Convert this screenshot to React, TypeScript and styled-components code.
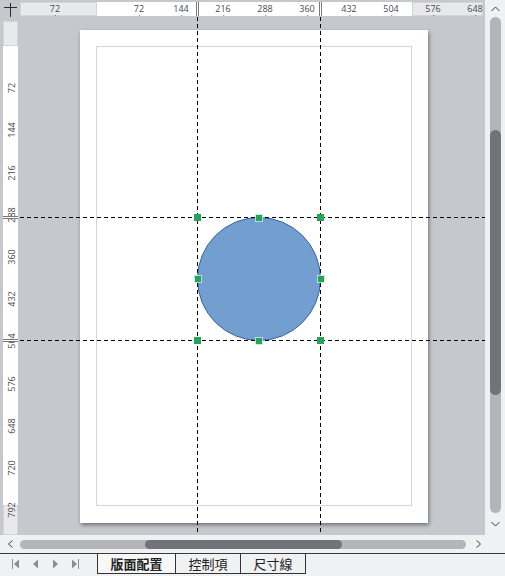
import React from 'react';
import styled, { createGlobalStyle } from 'styled-components';

const GlobalStyle = createGlobalStyle`
  html, body { margin: 0; padding: 0; background: #f0f1f2; overflow: hidden; }
  #root { width: 505px; height: 576px; }
`;

const Window = styled.div`
  width: 505px;
  height: 576px;
  display: flex;
  flex-direction: column;
  background: #f0f1f2;
  font-family: "Open Sans", "Noto Sans", sans-serif;
`;

const MainRow = styled.div`
  display: flex;
  height: 535px;
`;

const Editor = styled.div`
  width: 485px;
  background: #c5c9cd;
  display: grid;
  grid-template-columns: 20px 465px;
  grid-template-rows: 17px 518px;
`;

const Corner = styled.div`
  display: flex;
  padding: 3px 0 0 4px;
`;

const TopRuler = styled.div`
  margin-top: 2px;
  width: 463px;
  height: 14px;
  display: flex;
  position: relative;
  font-size: 9px;
  color: #4a4a4a;
`;

const Zone = styled.div<{ $size?: number; $white?: boolean; $vertical?: boolean }>`
  ${(p) => (p.$size ? `flex: 0 0 ${p.$size}px;` : 'flex: 1;')}
  background: ${(p) => (p.$white ? '#ffffff' : '#e7e9eb')};
  box-sizing: border-box;
  ${(p) => (p.$white ? '' : 'border: 1px solid #d2d5d8;')}
`;

const HLabel = styled.span`
  position: absolute;
  top: 1px;
  transform: translateX(-50%);
  line-height: 11px;
  white-space: nowrap;
  &::after {
    content: "";
    position: absolute;
    left: 50%;
    bottom: -2px;
    width: 1px;
    height: 1px;
    background: #777;
  }
`;

const HGuideMark = styled.div`
  position: absolute;
  top: 0;
  width: 1px;
  height: 14px;
  border-left: 1px solid #7a7a7a;
  border-right: 1px solid #7a7a7a;
  background: #fff;
`;

const LeftRuler = styled.div`
  margin: 4px 0 0 3px;
  width: 15px;
  height: 514px;
  display: flex;
  flex-direction: column;
  position: relative;
  font-size: 9px;
  color: #4a4a4a;
`;

const VLabel = styled.span`
  position: absolute;
  left: 50%;
  transform: translate(-50%, -50%) rotate(-90deg);
  line-height: 11px;
  white-space: nowrap;
`;

const VGuideMark = styled.div`
  position: absolute;
  left: 0;
  width: 15px;
  height: 1px;
  border-top: 1px solid #7a7a7a;
  border-bottom: 1px solid #7a7a7a;
  background: #fff;
`;

const Canvas = styled.div`
  position: relative;
  overflow: hidden;
  padding: 13px 0 0 60px;
  box-sizing: border-box;
`;

const Page = styled.div`
  width: 348px;
  height: 493px;
  background: #ffffff;
  box-shadow: 1px 2px 4px rgba(0, 0, 0, 0.45);
  padding: 16px 16px 17px 16px;
  box-sizing: border-box;
`;

const MarginBox = styled.div`
  height: 100%;
  border: 1px solid #d4d4d4;
  box-sizing: border-box;
`;

const Drawing = styled.svg`
  position: absolute;
  left: 0;
  top: 0;
`;

const VScroll = styled.div`
  width: 20px;
  display: flex;
  flex-direction: column;
  align-items: center;
`;

const ArrowBox = styled.div<{ $h?: number; $w?: number }>`
  ${(p) => (p.$h ? `height: ${p.$h}px;` : '')}
  ${(p) => (p.$w ? `width: ${p.$w}px; flex: 0 0 ${p.$w}px;` : '')}
  display: flex;
  align-items: center;
  justify-content: center;
`;

const VTrack = styled.div`
  width: 11px;
  flex: 1;
  margin-left: 1px;
  border-radius: 6px;
  background: #b3b5b8;
  display: flex;
  flex-direction: column;
`;

const VThumb = styled.div<{ $offset: number; $size: number }>`
  margin-top: ${(p) => p.$offset}px;
  height: ${(p) => p.$size}px;
  border-radius: 6px;
  background: #707377;
`;

const HScroll = styled.div`
  height: 18px;
  display: flex;
  align-items: center;
`;

const HTrack = styled.div`
  width: 446px;
  height: 9px;
  margin-top: 1px;
  border-radius: 5px;
  background: #b3b5b8;
  display: flex;
`;

const HThumb = styled.div<{ $offset: number; $size: number }>`
  margin-left: ${(p) => p.$offset}px;
  width: ${(p) => p.$size}px;
  border-radius: 5px;
  background: #707377;
`;

const TabBar = styled.div`
  height: 23px;
  border-top: 1px solid #3a3a3a;
  box-sizing: border-box;
  display: flex;
  align-items: flex-start;
`;

const Nav = styled.div`
  width: 97px;
  height: 20px;
  display: flex;
  align-items: center;
  gap: 13px;
  padding-left: 12px;
  box-sizing: border-box;
`;

const Tab = styled.div<{ $w: number; $active?: boolean; $first?: boolean }>`
  width: ${(p) => p.$w}px;
  height: 20px;
  box-sizing: border-box;
  border-right: 1px solid #333;
  border-bottom: 1px solid #333;
  ${(p) => (p.$first ? 'border-left: 1px solid #333;' : '')}
  background: ${(p) => (p.$active ? '#f7f7f7' : '#f0f1f2')};
  display: flex;
  align-items: center;
  justify-content: center;
  font-family: "Noto Sans CJK TC", "Noto Sans", sans-serif;
  font-size: 13px;
  font-weight: ${(p) => (p.$active ? 700 : 400)};
  color: #222;
  line-height: 1;
`;

const Chevron = ({ dir }: { dir: 'up' | 'down' | 'left' | 'right' }) => {
  const pts: Record<string, string> = {
    up: '0.5,5 4.5,1 8.5,5',
    down: '0.5,1 4.5,5 8.5,1',
    left: '4.5,0.5 0.5,4 4.5,7.5',
    right: '0.5,0.5 4.5,4 0.5,7.5',
  };
  const vertical = dir === 'up' || dir === 'down';
  return (
    <svg width={vertical ? 9 : 5} height={vertical ? 6 : 8} viewBox={vertical ? '0 0 9 6' : '0 0 5 8'}>
      <polyline points={pts[dir]} fill="none" stroke="#3a3a3a" strokeWidth="1" />
    </svg>
  );
};

const NavIcon = ({ kind }: { kind: 'first' | 'prev' | 'next' | 'last' }) => {
  const c = '#8d8d8d';
  return (
    <svg width="7" height="10" viewBox="0 0 7 10">
      {kind === 'first' && (
        <>
          <rect x="0" y="0" width="1" height="10" fill={c} />
          <polygon points="7,0.5 2,5 7,9.5" fill={c} />
        </>
      )}
      {kind === 'prev' && <polygon points="6,0.5 1,5 6,9.5" fill={c} />}
      {kind === 'next' && <polygon points="1,0.5 6,5 1,9.5" fill={c} />}
      {kind === 'last' && (
        <>
          <polygon points="0,0.5 5,5 0,9.5" fill={c} />
          <rect x="6" y="0" width="1" height="10" fill={c} />
        </>
      )}
    </svg>
  );
};

const hLabels = [-1, 1, 2, 3, 4, 5, 6, 7, 8, 9];
const vLabels = [1, 2, 3, 4, 5, 6, 7, 8, 9, 10, 11];

const green = '#25a35b';

export default function App() {
  const bbox = { x1: 177.5, x2: 300.5, y1: 200.5, y2: 323.5 };
  const cx = (bbox.x1 + bbox.x2) / 2;
  const cy = (bbox.y1 + bbox.y2) / 2;
  const corners = [
    [bbox.x1, bbox.y1],
    [bbox.x2, bbox.y1],
    [bbox.x1, bbox.y2],
    [bbox.x2, bbox.y2],
  ];
  const mids = [
    [cx, bbox.y1],
    [bbox.x1, cy],
    [bbox.x2, cy],
    [cx, bbox.y2],
  ];
  return (
    <>
      <GlobalStyle />
      <Window>
        <MainRow>
          <Editor>
            <Corner>
              <svg width="13" height="14" viewBox="0 0 13 14">
                <line x1="0" y1="4.5" x2="13" y2="4.5" stroke="#2b2b2b" strokeWidth="1" />
                <line x1="6.5" y1="0" x2="6.5" y2="14" stroke="#2b2b2b" strokeWidth="1" />
              </svg>
            </Corner>
            <TopRuler>
              <Zone $size={77} />
              <Zone $size={315} $white />
              <Zone />
              {hLabels.map((n) => (
                <HLabel key={n} style={{ left: 77 + n * 42 }}>
                  {Math.abs(n) * 72}
                </HLabel>
              ))}
              <HGuideMark style={{ left: 176 }} />
              <HGuideMark style={{ left: 299 }} />
            </TopRuler>
            <LeftRuler>
              <Zone $size={25} />
              <Zone $size={459} $white />
              <Zone />
              {vLabels.map((n) => (
                <VLabel key={n} style={{ top: 25 + n * 42.2 }}>
                  {n * 72}
                </VLabel>
              ))}
              <VGuideMark style={{ top: 195 }} />
              <VGuideMark style={{ top: 318 }} />
            </LeftRuler>
            <Canvas>
              <Page>
                <MarginBox />
              </Page>
              <Drawing width="465" height="518" viewBox="0 0 465 518">
                <circle cx={cx} cy={cy} r={61.5} fill="#729fcf" stroke="#3465a4" strokeWidth="1" />
                {[bbox.x1, bbox.x2].map((x) => (
                  <line key={'v' + x} x1={x} y1={0} x2={x} y2={518} stroke="#000" strokeWidth="1" strokeDasharray="4 3" />
                ))}
                {[bbox.y1, bbox.y2].map((y) => (
                  <line key={'h' + y} x1={0} y1={y} x2={465} y2={y} stroke="#000" strokeWidth="1" strokeDasharray="4 3" />
                ))}
                {corners.map(([x, y], i) => (
                  <rect key={'c' + i} x={x - 3.5} y={y - 3.5} width="7" height="7" fill={green} />
                ))}
                {mids.map(([x, y], i) => (
                  <rect
                    key={'m' + i}
                    x={Math.round(x) - 4 + 0.5}
                    y={Math.round(y) - 4 + 0.5}
                    width="7"
                    height="7"
                    fill={green}
                    stroke="rgba(225,235,245,0.75)"
                    strokeWidth="1"
                  />
                ))}
              </Drawing>
            </Canvas>
          </Editor>
          <VScroll>
            <ArrowBox $h={17}>
              <Chevron dir="up" />
            </ArrowBox>
            <VTrack>
              <VThumb $offset={113} $size={265} />
            </VTrack>
            <ArrowBox $h={22}>
              <Chevron dir="down" />
            </ArrowBox>
          </VScroll>
        </MainRow>
        <HScroll>
          <ArrowBox $w={20}>
            <Chevron dir="left" />
          </ArrowBox>
          <HTrack>
            <HThumb $offset={125} $size={197} />
          </HTrack>
          <ArrowBox $w={24}>
            <Chevron dir="right" />
          </ArrowBox>
        </HScroll>
        <TabBar>
          <Nav>
            <NavIcon kind="first" />
            <NavIcon kind="prev" />
            <NavIcon kind="next" />
            <NavIcon kind="last" />
          </Nav>
          <Tab $w={79} $active $first>
            版面配置
          </Tab>
          <Tab $w={65}>控制項</Tab>
          <Tab $w={65}>尺寸線</Tab>
        </TabBar>
      </Window>
    </>
  );
}
